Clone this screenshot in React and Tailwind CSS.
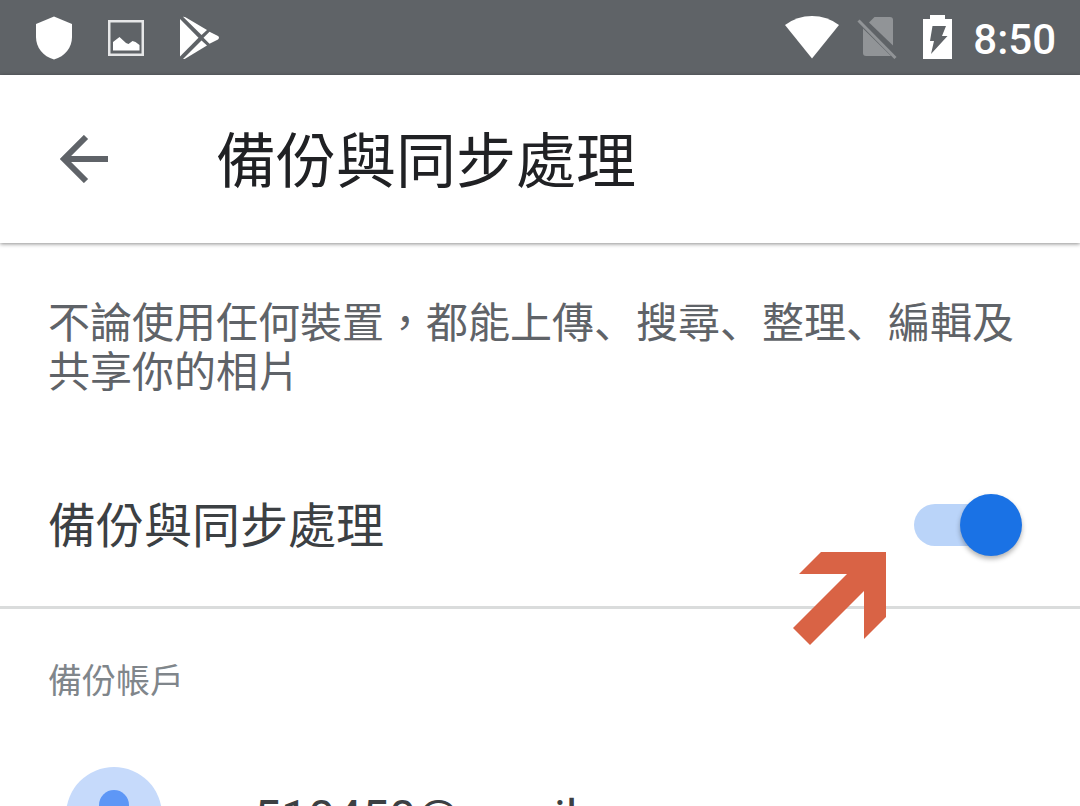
function ShieldIcon() {
  return (
    <svg className="h-11 w-9" viewBox="0 0 36 44" fill="#fff" aria-hidden="true">
      <path d="M18 .5 36 8v13c0 10.500-7 19.500-18 22.500C7 40.500 0 31.500 0 21V8z" />
    </svg>
  );
}

function ImageIcon() {
  return (
    <svg className="h-9 w-9" viewBox="0 0 36 36" aria-hidden="true">
      <rect x="1.250" y="1.250" width="33.500" height="33.500" fill="none" stroke="#e6e7e8" strokeWidth="2.500" />
      <path d="M5 30.500V22l6.500-5 6.500 6 2.500 1 4-3 3 1 4 3v5.500z" fill="#fff" />
    </svg>
  );
}

function PlayStoreIcon() {
  return (
    <svg className="h-11 w-10" viewBox="0 0 40 44" fill="#fff" aria-hidden="true">
      <path d="M0 3v37.500l18.500-18.700z" />
      <path d="M3 .8Q4 .6 5.500 1.300L27 14l-5.500 5z" />
      <path d="M3 43Q4 43.400 5.500 42.500L27 29.500l-5.500-5z" />
      <path d="M29.500 15.800 23.500 21.800 29.500 27.800 38 23.500q2-1.700 0-3.400z" />
    </svg>
  );
}

function WifiIcon() {
  return (
    <svg className="h-11 w-[54px]" viewBox="0 0 54 44" fill="#fff" aria-hidden="true">
      <path d="M0 10Q12 1 27 1t27 9L27 43.500z" />
    </svg>
  );
}

function NoSimIcon() {
  return (
    <svg className="h-11 w-10" viewBox="0 0 40 44" aria-hidden="true">
      <path d="M12 7.500 17.500 2H33q3 0 3 3v25.500z" fill="#919497" />
      <path d="M6 13.500 34 41H9q-3 0-3-3z" fill="#919497" />
      <path d="M1.500 5.500 38.500 43" stroke="#919497" strokeWidth="3" />
    </svg>
  );
}

function BatteryIcon() {
  return (
    <svg className="h-11 w-[29px]" viewBox="0 0 29 44" aria-hidden="true">
      <path d="M7 0h15v4h7v40H0V4h7z" fill="#fff" />
      <path d="M9.500 11H23l-4 10h5.500L8 39l3-13H7z" fill="#5f6367" />
    </svg>
  );
}

function StatusBar() {
  return (
    <div className="flex h-[75px] shrink-0 items-center justify-between bg-[#5f6367] pr-6 pl-9">
      <div className="flex items-center gap-9">
        <ShieldIcon />
        <ImageIcon />
        <PlayStoreIcon />
      </div>
      <div className="flex items-center text-white">
        <div className="flex items-center pb-0.5">
          <WifiIcon />
          <div className="ml-[18px] flex"><NoSimIcon /></div>
          <div className="ml-[26px] flex"><BatteryIcon /></div>
        </div>
        <time className="ml-[21px] pt-1 text-[42px] leading-none font-medium">8:50</time>
      </div>
    </div>
  );
}

function BackupSwitch() {
  return (
    <span className="relative flex h-16 w-28 items-center">
      <input
        id="backup"
        type="checkbox"
        role="switch"
        defaultChecked
        className="peer h-[42px] w-[100px] cursor-pointer appearance-none rounded-full bg-[#dadce0] checked:bg-[#bad4f9]"
      />
      <span className="pointer-events-none absolute left-0 size-[62px] rounded-full bg-[#f1f3f4] shadow-[0_3px_5px_rgba(0,0,0,0.3)] peer-checked:left-[46px] peer-checked:bg-[#1a72e5]" />
      <svg className="pointer-events-none absolute top-[59px] right-[139px] h-[94px] w-[94px]" viewBox="0 0 94 94" aria-hidden="true">
        <path d="M28 0H93V65L71 87V39L17 93 0 76 54 22H6z" fill="#d96345" />
      </svg>
    </span>
  );
}

function ListComma() {
  return <span className="font-[Roboto,'Noto_Sans_CJK_JP',sans-serif]" lang="ja">、</span>;
}

export default function App() {
  return (
    <div
      lang="zh-Hant"
      className="flex h-screen flex-col overflow-hidden bg-white font-[Roboto,'Noto_Sans_CJK_TC',sans-serif]"
    >
      <StatusBar />
      <header className="flex h-[168px] shrink-0 items-center bg-white pl-[60px] shadow-[0_1px_4px_rgba(0,0,0,0.45)]">
        <button type="button" aria-label="返回" className="flex size-12">
          <svg viewBox="0 0 48 48" fill="none" stroke="#5f6368" strokeWidth="6" aria-hidden="true">
            <path d="M48 24H5M26 2 4 24l22 22" />
          </svg>
        </button>
        <h1 className="ml-[108px] pt-2 text-[60px] leading-none text-[#202124]">備份與同步處理</h1>
      </header>
      <main>
        <p className="px-12 pt-14 text-[42px] leading-[49px] text-[#5f6368]">
          不論使用任何裝置，都能上傳<ListComma />搜尋<ListComma />整理<ListComma />編輯及共享你的相片
        </p>
        <div className="mt-12 flex h-[164px] items-center justify-between border-b-3 border-[#dadcdc] pr-[54px] pb-0.5 pl-12">
          <label htmlFor="backup" className="pt-1 text-[48px] leading-none text-[#3c4043]">備份與同步處理</label>
          <BackupSwitch />
        </div>
        <section>
          <h2 className="px-12 pt-[52px] text-[34px] leading-10 text-[#80868b]">備份帳戶</h2>
          <div className="mt-[66px] flex items-center pl-[66px]">
            <svg className="size-24 shrink-0" viewBox="0 0 96 96" aria-hidden="true">
              <circle cx="48" cy="48" r="48" fill="#c6dafb" />
              <circle cx="48" cy="38" r="15" fill="#5e97f6" />
              <path d="M18 74c0-12 14-18 30-18s30 6 30 18a41 41 0 0 1-60 0z" fill="#5e97f6" />
            </svg>
            <span className="ml-[92px] pt-1.5 text-[48px] leading-none text-[#3c4043]">510450@gmail.com</span>
          </div>
        </section>
      </main>
    </div>
  );
}
